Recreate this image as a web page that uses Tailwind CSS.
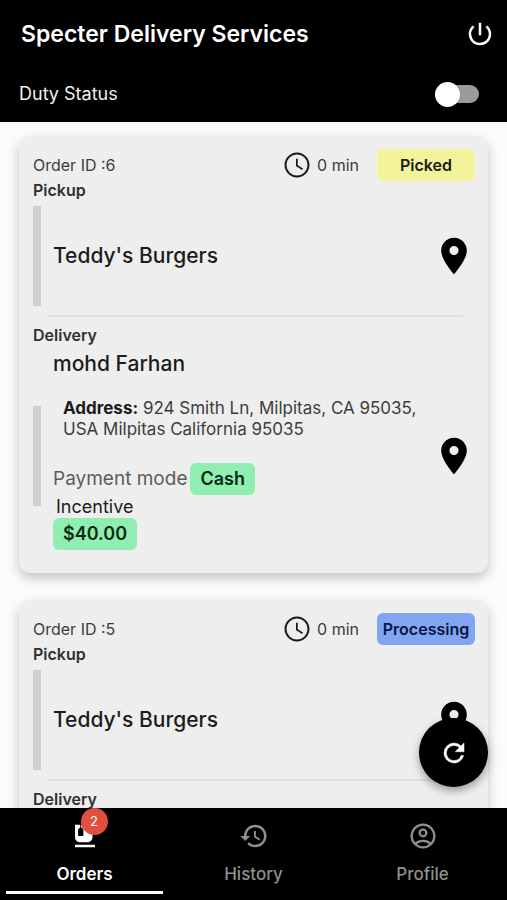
<!DOCTYPE html>
<html lang="en">
<head>
<meta charset="utf-8">
<meta name="viewport" content="width=device-width, initial-scale=1">
<title>Specter Delivery Services</title>
<script src="https://cdn.jsdelivr.net/npm/@tailwindcss/browser@4"></script>
</head>
<body class="flex h-screen flex-col bg-[#fbfbfb] font-['Inter','Roboto',sans-serif] text-[#1c1c1c]">

<header class="bg-black pt-3 pb-[7px] text-white">
  <div class="flex h-11 items-center justify-between pr-3 pl-[21px]">
    <h1 class="text-[23px] leading-7 font-semibold">Specter Delivery Services</h1>
    <button type="button" aria-label="Log out">
      <svg class="size-[30px]" viewBox="0 0 24 24" fill="currentColor"><path d="M13 3h-2v10h2V3zm4.83 2.17l-1.42 1.42A6.92 6.92 0 0 1 19 12c0 3.87-3.13 7-7 7A6.995 6.995 0 0 1 7.58 6.58L6.17 5.17A8.932 8.932 0 0 0 3 12a9 9 0 0 0 18 0c0-2.74-1.23-5.18-3.17-6.83z"/></svg>
    </button>
  </div>
  <div class="mt-[17px] flex h-[42px] items-center justify-between pr-7 pl-[19px]">
    <label for="duty" class="text-lg leading-6 text-[#f0f0f0]">Duty Status</label>
    <input id="duty" type="checkbox" role="switch" class="flex h-[18px] w-11 appearance-none items-center rounded-full bg-[#9b9b9b] before:block before:size-[25px] before:shrink-0 before:rounded-full before:bg-white before:shadow checked:justify-end">
  </div>
</header>

<main class="relative min-h-0 flex-1">
  <div class="h-full overflow-y-auto pt-[14px] pr-[19px] pl-[19px] [scrollbar-width:none]">

    <article class="mb-[27px] rounded-xl bg-[#eeeeee] px-[13px] pt-[13px] pb-[13px] shadow-[0_5px_12px_rgba(0,0,0,0.22)]">
      <div class="flex h-8 items-center">
        <h2 class="flex-1 pl-px text-base text-[#3c3c3c]">Order ID :6</h2>
        <svg class="size-[30px]" viewBox="0 0 24 24" fill="currentColor"><path d="M11.99 2C6.47 2 2 6.48 2 12s4.47 10 9.99 10C17.52 22 22 17.52 22 12S17.52 2 11.99 2zM12 20.4a8.4 8.4 0 1 1 0-16.8 8.4 8.4 0 0 1 0 16.8z"/><path d="M12.6 7h-1.4v6l4.9 2.9.7-1.2-4.2-2.5z"/></svg>
        <span class="mr-[18px] ml-[5px] text-base text-[#3c3c3c]">0 min</span>
        <span class="flex h-8 w-[98px] items-center justify-center rounded-md bg-[#f3f39a] text-base font-semibold">Picked</span>
      </div>
      <h3 class="pl-px text-base leading-[18px] font-semibold text-[#303030]">Pickup</h3>
      <div class="mt-[7px] flex items-center">
        <div class="ml-px h-[100px] w-2 bg-[#cfcfcf]"></div>
        <p class="flex-1 pl-3 text-[21px] leading-7 font-medium">Teddy's Burgers</p>
        <button type="button" aria-label="Pickup location" class="-mr-px text-black"><svg class="size-11" viewBox="0 0 24 24" fill="currentColor"><path d="M12 2C8.13 2 5 5.13 5 9c0 5.25 7 13 7 13s7-7.75 7-13c0-3.87-3.13-7-7-7zm0 9.5a2.5 2.5 0 0 1 0-5 2.5 2.5 0 0 1 0 5z"/></svg></button>
      </div>
      <hr class="mt-[9px] mr-3 ml-[15px] border-t-2 border-[#dedede]">
      <h3 class="mt-[7px] pl-px text-base leading-[22px] font-semibold text-[#303030]">Delivery</h3>
      <div class="mt-[6px] flex items-center">
        <div class="ml-px h-[100px] w-2 bg-[#cfcfcf]"></div>
        <div class="flex flex-1 flex-col items-start pb-[10px] pl-3">
          <p class="text-[21px] leading-6 font-medium">mohd Farhan</p>
          <p class="mt-[22px] pl-[10px] text-[17px] leading-[21px] text-[#3c3c3c]"><strong class="font-bold text-[#1c1c1c]">Address:</strong> 924 Smith Ln, Milpitas, CA 95035, USA Milpitas California 95035</p>
          <p class="mt-[23px] flex items-center gap-[3px] text-[19px] leading-8 text-[#5c5c5c]">Payment mode <span class="rounded-md bg-[#90eeb0] px-[10px] text-lg leading-8 font-semibold text-[#062b14]">Cash</span></p>
          <p class="pt-px pl-[3px] text-lg leading-[22px]">Incentive</p>
          <p class="rounded-md bg-[#90eeb0] px-[10px] text-lg leading-8 font-semibold text-[#062b14]">$40.00</p>
        </div>
        <button type="button" aria-label="Delivery location" class="-mr-px text-black"><svg class="size-11" viewBox="0 0 24 24" fill="currentColor"><path d="M12 2C8.13 2 5 5.13 5 9c0 5.25 7 13 7 13s7-7.75 7-13c0-3.87-3.13-7-7-7zm0 9.5a2.5 2.5 0 0 1 0-5 2.5 2.5 0 0 1 0 5z"/></svg></button>
      </div>
    </article>

    <article class="rounded-xl bg-[#eeeeee] px-[13px] pt-[13px] pb-[13px] shadow-[0_5px_12px_rgba(0,0,0,0.22)]">
      <div class="flex h-8 items-center">
        <h2 class="flex-1 pl-px text-base text-[#3c3c3c]">Order ID :5</h2>
        <svg class="size-[30px]" viewBox="0 0 24 24" fill="currentColor"><path d="M11.99 2C6.47 2 2 6.48 2 12s4.47 10 9.99 10C17.52 22 22 17.52 22 12S17.52 2 11.99 2zM12 20.4a8.4 8.4 0 1 1 0-16.8 8.4 8.4 0 0 1 0 16.8z"/><path d="M12.6 7h-1.4v6l4.9 2.9.7-1.2-4.2-2.5z"/></svg>
        <span class="mr-[18px] ml-[5px] text-base text-[#3c3c3c]">0 min</span>
        <span class="flex h-8 w-[98px] items-center justify-center rounded-md bg-[#81a5f3] text-base font-semibold text-[#0a1540]">Processing</span>
      </div>
      <h3 class="pl-px text-base leading-[18px] font-semibold text-[#303030]">Pickup</h3>
      <div class="mt-[7px] flex items-center">
        <div class="ml-px h-[100px] w-2 bg-[#cfcfcf]"></div>
        <p class="flex-1 pl-3 text-[21px] leading-7 font-medium">Teddy's Burgers</p>
        <button type="button" aria-label="Pickup location" class="-mr-px text-black"><svg class="size-11" viewBox="0 0 24 24" fill="currentColor"><path d="M12 2C8.13 2 5 5.13 5 9c0 5.25 7 13 7 13s7-7.75 7-13c0-3.87-3.13-7-7-7zm0 9.5a2.5 2.5 0 0 1 0-5 2.5 2.5 0 0 1 0 5z"/></svg></button>
      </div>
      <hr class="mt-[9px] mr-3 ml-[15px] border-t-2 border-[#dedede]">
      <h3 class="mt-[7px] pl-px text-base leading-[22px] font-semibold text-[#303030]">Delivery</h3>
    </article>
  </div>

  <button type="button" aria-label="Refresh" class="absolute right-[19px] bottom-[21px] flex size-[69px] items-center justify-center rounded-full bg-black text-white shadow-[0_4px_9px_rgba(0,0,0,0.35)]">
    <svg class="size-[30px]" viewBox="0 0 24 24" fill="currentColor" stroke="currentColor" stroke-width=".4"><path d="M17.65 6.35A7.958 7.958 0 0 0 12 4a8 8 0 1 0 7.73 10h-2.08A5.99 5.99 0 0 1 12 18a6 6 0 1 1 4.22-10.22L13 11h7V4l-2.35 2.35z"/></svg>
  </button>
</main>

<nav class="grid h-[92px] shrink-0 grid-cols-3 bg-black text-[17px] text-[#8f8f8f]">
  <a href="#orders" aria-current="page" class="flex flex-col items-center px-[6px] pt-[13px] font-semibold text-white">
    <span class="relative">
      <svg class="size-[30px]" viewBox="0 0 24 24" fill="currentColor"><path d="M20 3H9v2.200l1.300.9c.25.2.4.45.4.75v4.700c0 .28-.22.5-.5.5H7c-.28 0-.5-.22-.5-.5V6.850c0-.3.15-.55.4-.75L8.200 5.200V3H4v10c0 2.210 1.790 4 4 4h6c2.210 0 4-1.790 4-4v-3h2c1.110 0 2-.89 2-2V5c0-1.110-.89-2-2-2zm0 5h-2V5h2v3zM4 19h16v2H4z"/></svg>
      <span class="absolute -top-[13px] -right-2 flex size-[27px] items-center justify-center rounded-full bg-[#e04f40] text-[13px] font-normal">2</span>
    </span>
    <span class="mt-[9px] leading-7">Orders</span>
    <span class="mt-[3px] h-[3px] w-full bg-white"></span>
  </a>
  <a href="#history" class="flex flex-col items-center pt-[13px] font-medium">
    <svg class="size-[30px]" viewBox="0 0 24 24" fill="currentColor"><path d="M13 3a9 9 0 0 0-9 9H1l3.89 3.89.07.14L9 12H6c0-3.87 3.13-7 7-7s7 3.13 7 7-3.13 7-7 7c-1.93 0-3.68-.79-4.94-2.06l-1.42 1.42A8.954 8.954 0 0 0 13 21a9 9 0 0 0 0-18zm-1 5v5l4.28 2.54.72-1.21-3.5-2.08V8H12z"/></svg>
    <span class="mt-[9px] leading-7">History</span>
  </a>
  <a href="#profile" class="flex flex-col items-center pt-[13px] font-medium">
    <svg class="size-[30px]" viewBox="0 0 24 24" fill="none" stroke="currentColor" stroke-width="1.8"><circle cx="12" cy="12" r="9.1"/><circle cx="12" cy="9.5" r="2.7"/><path d="M6 18.2c1.500-1.500 3.700-2.300 6-2.300s4.500.8 6 2.300"/></svg>
    <span class="mt-[9px] leading-7">Profile</span>
  </a>
</nav>
</body>
</html>
